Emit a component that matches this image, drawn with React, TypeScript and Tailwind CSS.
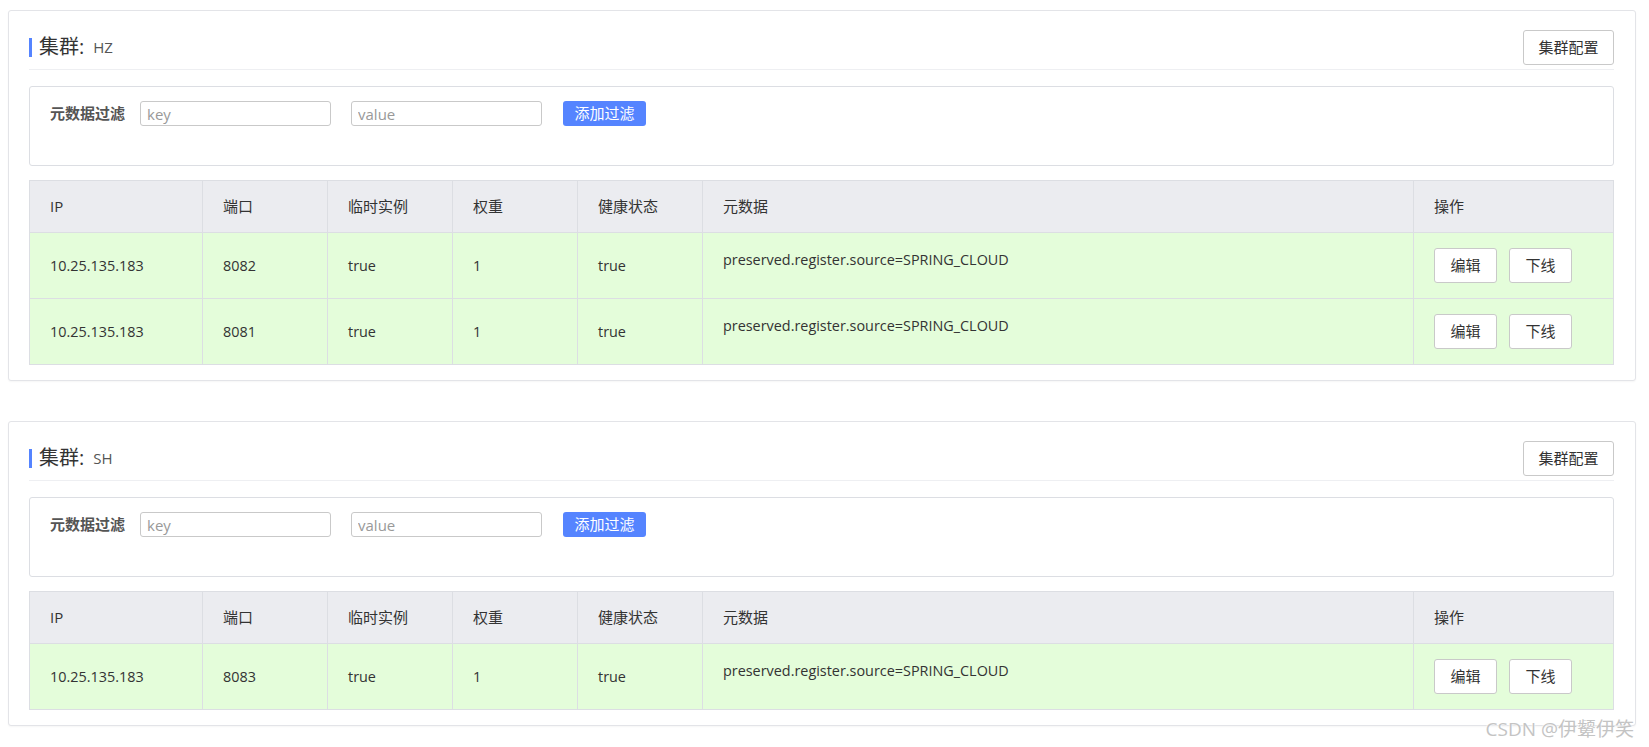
import React from "react";

const clusters = [
  {
    name: "HZ",
    instances: [
      { ip: "10.25.135.183", port: "8082", ephemeral: "true", weight: "1", healthy: "true", meta: "preserved.register.source=SPRING_CLOUD" },
      { ip: "10.25.135.183", port: "8081", ephemeral: "true", weight: "1", healthy: "true", meta: "preserved.register.source=SPRING_CLOUD" },
    ],
  },
  {
    name: "SH",
    instances: [
      { ip: "10.25.135.183", port: "8083", ephemeral: "true", weight: "1", healthy: "true", meta: "preserved.register.source=SPRING_CLOUD" },
    ],
  },
];

const columns = [
  { title: "IP", width: "w-[173px]" },
  { title: "端口", width: "w-[125px]" },
  { title: "临时实例", width: "w-[125px]" },
  { title: "权重", width: "w-[125px]" },
  { title: "健康状态", width: "w-[125px]" },
  { title: "元数据", width: "w-[711px]" },
  { title: "操作", width: "w-[200px]" },
];

const ClusterCard = ({ cluster }: { cluster: (typeof clusters)[number] }) => {
  return (
    <div className="border border-[#e3e4e8] rounded-[3px] bg-white pl-[20px] pr-[21px] pt-[19px] pb-[15px] shadow-[0_1px_2px_rgba(0,0,0,0.04)]">
      <div className="flex items-center justify-between h-[40px] pb-[5px] border-b border-[#eeeff2]">
        <div className="flex items-center">
          <span className="w-[3px] h-[19px] bg-[#5584ff]"></span>
          <span className="ml-[7px] text-[20px] leading-[24px] text-[#333]">集群:</span>
          <span className="ml-[9px] text-[15px] leading-[20px] text-[#555]">{cluster.name}</span>
        </div>
        <button className="h-[35px] w-[91px] border border-[#c9c9c9] rounded-[3px] bg-white text-[15px] text-[#333]">
          集群配置
        </button>
      </div>

      <div className="mt-[16px] h-[80px] border border-[#dcdee3] rounded-[3px] px-[20px] pt-[14px]">
        <div className="flex items-center">
          <span className="text-[15px] font-bold text-[#555] leading-[25px]">元数据过滤</span>
          <input
            placeholder="key"
            className="ml-[15px] w-[191px] h-[25px] border border-[#c9c9c9] rounded-[3px] px-[6px] text-[15px] text-[#333] placeholder:text-[#999] outline-none"
          />
          <input
            placeholder="value"
            className="ml-[20px] w-[191px] h-[25px] border border-[#c9c9c9] rounded-[3px] px-[6px] text-[15px] text-[#333] placeholder:text-[#999] outline-none"
          />
          <button className="ml-[21px] w-[83px] h-[25px] rounded-[3px] bg-[#5584ff] text-white text-[15px] leading-[25px]">
            添加过滤
          </button>
        </div>
      </div>

      <table className="mt-[14px] w-full table-fixed border-collapse text-[15px] text-[#333]">
        <colgroup>
          {columns.map((c) => (
            <col key={c.title} className={c.width} />
          ))}
        </colgroup>
        <thead>
          <tr className="bg-[#ebecf0] h-[52px]">
            {columns.map((c) => (
              <th key={c.title} className="border border-[#dcdee3] px-[20px] text-left font-normal">
                {c.title}
              </th>
            ))}
          </tr>
        </thead>
        <tbody className="text-[14.4px]">
          {cluster.instances.map((inst, i) => (
            <tr key={i} className="bg-[#e4fdda] h-[66px]">
              <td className="border border-[#dcdee3] px-[20px]">{inst.ip}</td>
              <td className="border border-[#dcdee3] px-[20px]">{inst.port}</td>
              <td className="border border-[#dcdee3] px-[20px]">{inst.ephemeral}</td>
              <td className="border border-[#dcdee3] px-[20px]">{inst.weight}</td>
              <td className="border border-[#dcdee3] px-[20px]">{inst.healthy}</td>
              <td className="border border-[#dcdee3] px-[20px] pt-[16px] align-top">{inst.meta}</td>
              <td className="border border-[#dcdee3] px-[20px]">
                <div className="flex gap-[12px]">
                  <button className="w-[63px] h-[35px] border border-[#c9c9c9] rounded-[3px] bg-white text-[15px] text-[#333]">编辑</button>
                  <button className="w-[63px] h-[35px] border border-[#c9c9c9] rounded-[3px] bg-white text-[15px] text-[#333]">下线</button>
                </div>
              </td>
            </tr>
          ))}
        </tbody>
      </table>
    </div>
  );
}

export default function App() {
  return (
    <div className="relative h-[747px] overflow-hidden bg-white pl-[8px] pr-[13px] pt-[10px] font-['Open_Sans','Noto_Sans_CJK_SC',sans-serif]">
      <div className="flex flex-col gap-[40px]">
        {clusters.map((c) => (
          <ClusterCard key={c.name} cluster={c} />
        ))}
      </div>
      <div className="absolute right-[15px] top-[716px] text-[19px] leading-[26px] text-[#c4c4c4] [text-shadow:0_0_2px_#fff,0_0_2px_#fff]">
        CSDN @伊颦伊笑
      </div>
    </div>
  );
}
